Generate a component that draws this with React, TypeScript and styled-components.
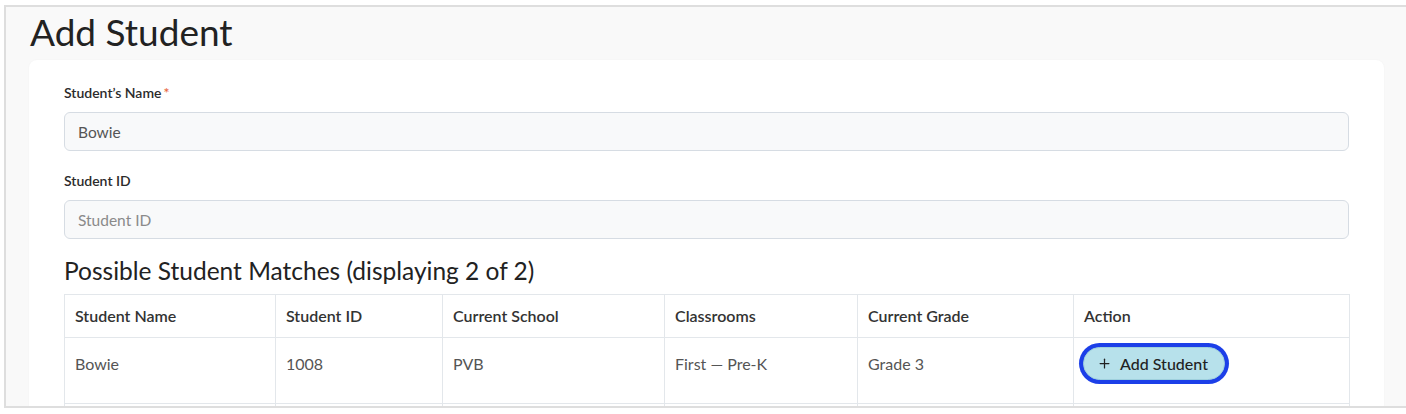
import React from 'react';
import styled, { createGlobalStyle } from 'styled-components';
import { Plus } from 'lucide-react';

const GlobalStyle = createGlobalStyle`
  html, body {
    margin: 0;
    padding: 0;
    background: #ffffff;
    overflow: hidden;
    font-family: Lato, "Open Sans", Arial, sans-serif;
    -webkit-font-smoothing: antialiased;
  }
  * { box-sizing: border-box; }
`;

// === STYLED COMPONENTS ===

const Frame = styled.div`
  margin: 5px -12px 0 4px;
  height: 403px;
  border: 2px solid #dedede;
  border-right: none;
  background: #f9f9f9;
  overflow: hidden;
  padding-left: 23px;
`;

const PageTitle = styled.h1`
  margin: 5px 0 8px 1px;
  font-size: 37px;
  line-height: 40px;
  font-weight: 400;
  color: #222;
`;

const Card = styled.div`
  width: 1355px;
  background: #fff;
  border-radius: 8px;
  box-shadow: 0 0 2px rgba(0, 0, 0, 0.04);
  padding: 24px 35px 40px;
`;

const Field = styled.div<{ $gap?: number }>`
  margin-bottom: ${({ $gap }) => $gap ?? 0}px;
`;

const Label = styled.label`
  display: block;
  font-size: 14px;
  line-height: 18px;
  font-weight: 600;
  color: #2b2b2b;
  margin-bottom: 10px;
`;

const Required = styled.span`
  color: #e8693f;
  margin-left: 2px;
`;

const TextInput = styled.input`
  display: block;
  width: 100%;
  height: 39px;
  padding: 0 13px;
  font-family: inherit;
  font-size: 15.5px;
  color: #555;
  background: #f8f9fa;
  border: 1px solid #d6dce3;
  border-radius: 6px;
  outline: none;

  &::placeholder {
    color: #8a8a8a;
  }
`;

const SectionTitle = styled.h2`
  margin: 18px 0 9px;
  font-size: 24.5px;
  line-height: 28px;
  font-weight: 400;
  color: #222;
`;

const Table = styled.table`
  width: 1285px;
  table-layout: fixed;
  border-collapse: collapse;
  font-size: 16px;
  line-height: 22px;
`;

const HeadCell = styled.th`
  text-align: left;
  font-weight: 600;
  color: #333;
  padding: 10px 10px;
  border: 1px solid #e3e7eb;
`;

const Cell = styled.td`
  vertical-align: top;
  color: #555;
  padding: 15px 10px 28px;
  border: 1px solid #e3e7eb;
`;

const AddButton = styled.button`
  display: flex;
  align-items: center;
  gap: 8px;
  width: 142px;
  height: 33px;
  margin: -6px 0 -5px -1px;
  padding: 0 12px 0 13px;
  font-family: inherit;
  font-size: 16px;
  font-weight: 500;
  color: #222;
  background: #b7e1eb;
  border: 1px solid #9fd0dd;
  border-radius: 999px;
  box-shadow: 0 0 0 4px #1c3fe8;
  white-space: nowrap;
  cursor: pointer;
`;

// === DATA ===

const columns = [
  { label: 'Student Name', width: 211 },
  { label: 'Student ID', width: 167 },
  { label: 'Current School', width: 222 },
  { label: 'Classrooms', width: 193 },
  { label: 'Current Grade', width: 216 },
  { label: 'Action', width: 276 },
];

const matches = [
  { name: 'Bowie', id: '1008', school: 'PVB', classrooms: 'First — Pre-K', grade: 'Grade 3' },
  { name: 'Bowie', id: '1014', school: 'PVB', classrooms: 'Second — K', grade: 'Grade 1' },
];

// === COMPONENT ===

export default function App() {
  return (
    <>
      <GlobalStyle />
      <Frame>
        <PageTitle>Add Student</PageTitle>
        <Card>
          <Field $gap={21}>
            <Label>
              Student’s Name<Required>*</Required>
            </Label>
            <TextInput defaultValue="Bowie" />
          </Field>

          <Field>
            <Label>Student ID</Label>
            <TextInput placeholder="Student ID" />
          </Field>

          <SectionTitle>Possible Student Matches (displaying 2 of 2)</SectionTitle>
          <Table>
            <colgroup>
              {columns.map((c) => (
                <col key={c.label} style={{ width: c.width }} />
              ))}
            </colgroup>
            <thead>
              <tr>
                {columns.map((c) => (
                  <HeadCell key={c.label}>{c.label}</HeadCell>
                ))}
              </tr>
            </thead>
            <tbody>
              {matches.map((m) => (
                <tr key={m.id}>
                  <Cell>{m.name}</Cell>
                  <Cell>{m.id}</Cell>
                  <Cell>{m.school}</Cell>
                  <Cell>{m.classrooms}</Cell>
                  <Cell>{m.grade}</Cell>
                  <Cell>
                    <AddButton>
                      <Plus size={15} strokeWidth={2} />
                      Add Student
                    </AddButton>
                  </Cell>
                </tr>
              ))}
            </tbody>
          </Table>
        </Card>
      </Frame>
    </>
  );
}
